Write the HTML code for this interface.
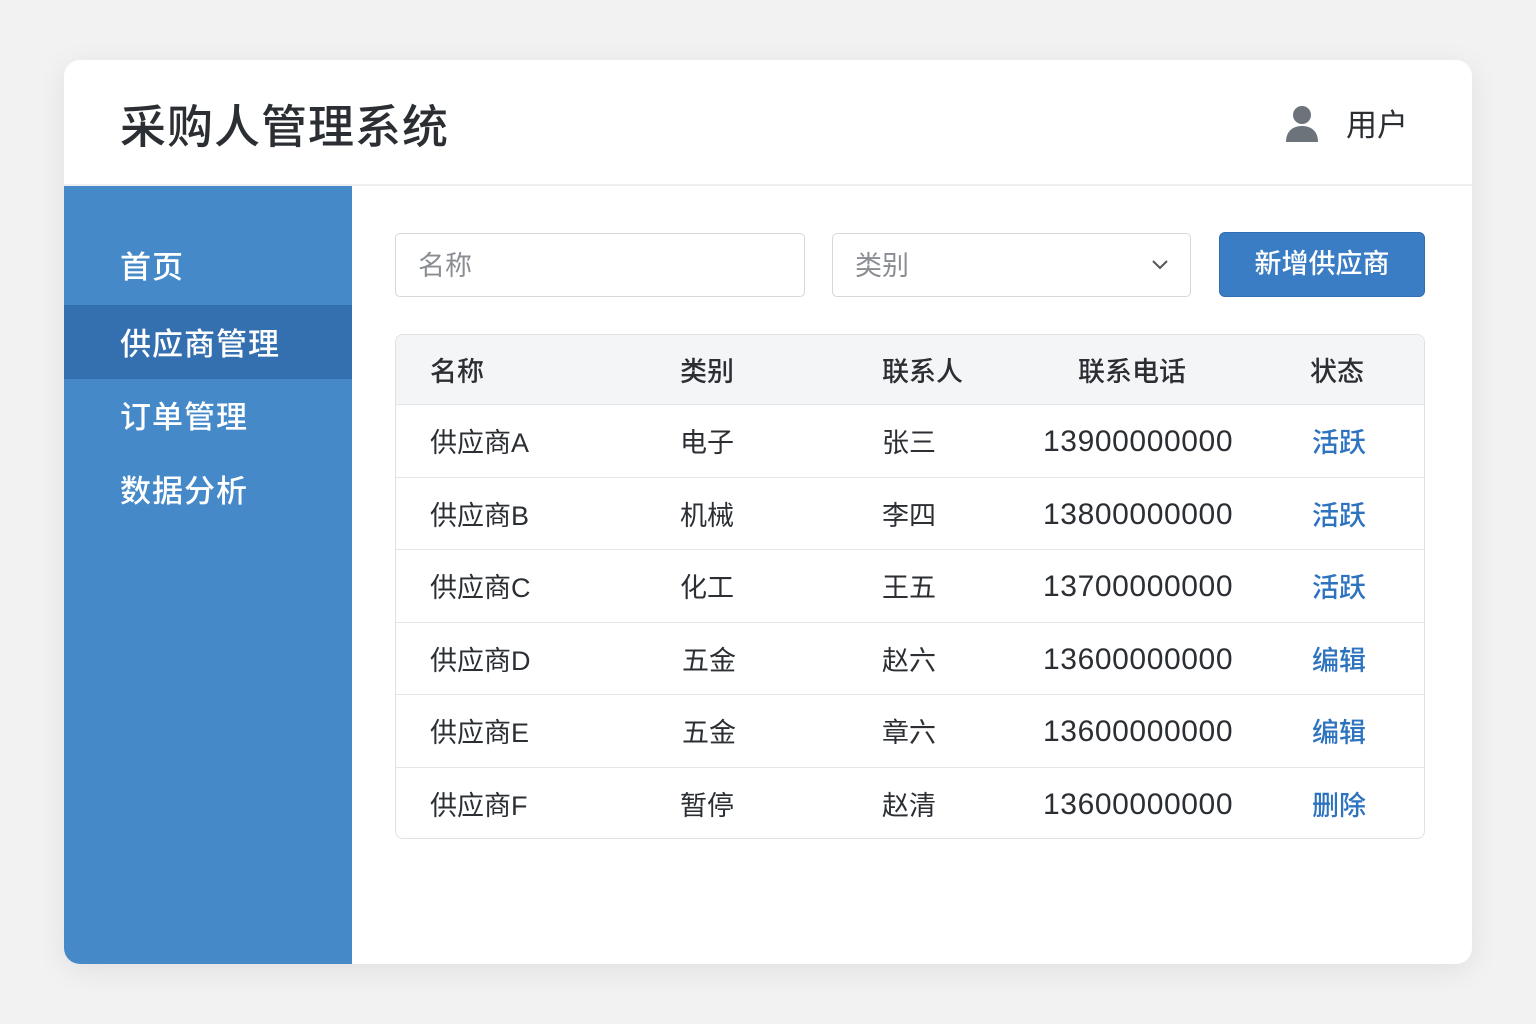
<!DOCTYPE html>
<html><head><meta charset="utf-8"><style>
*{margin:0;padding:0;box-sizing:border-box}
body{width:1536px;height:1024px;background:#f2f2f3;font-family:"Liberation Sans","Noto Sans CJK SC",sans-serif;position:relative;overflow:hidden}
.card{position:absolute;left:64px;top:60px;width:1408px;height:904px;background:#fff;border-radius:16px;box-shadow:0 6px 30px rgba(0,0,0,.08);overflow:hidden}
.hdr{position:absolute;left:0;top:0;width:1408px;height:126px;border-bottom:2px solid #eceef0}
.title{position:absolute;left:56px;top:31px;font-size:46px;color:#2b2f33;font-weight:500;letter-spacing:1px}
.user{position:absolute;left:1282px;top:40px;font-size:31px;color:#2b2f33}
.side{position:absolute;left:0;top:126px;width:288px;height:778px;background:#4589c8}
.side .it{position:absolute;left:56px;font-size:31px;color:#fff;font-weight:500;letter-spacing:1px}
.side .act{position:absolute;left:0;top:119px;width:288px;height:74px;background:#3470b0}
.in{position:absolute;top:173px;height:64px;border:1px solid #d4d7db;border-radius:5px;font-size:27px;color:#8a8e93;padding:10px 22px}
.btn{position:absolute;left:1155px;top:172px;width:206px;height:65px;background:#3a7dc4;border:1px solid #2f6eb0;border-radius:6px;color:#fff;font-size:27px;text-align:center;line-height:63px;font-weight:500}
.tbl{position:absolute;left:331px;top:274px;width:1030px;height:505px;border:1px solid #dfe1e4;border-radius:8px;overflow:hidden}
.row{position:absolute;left:0;width:1030px;height:72.5px;border-top:1px solid #e3e5e8;font-size:27px;color:#2b2f33}
.row span{position:absolute;top:16px}
.row span.ph{font-size:30px;top:20px;letter-spacing:0.6px}
.th{background:#f4f5f7;border-top:none;font-weight:500}
.st{color:#2e73c0;font-weight:500}
</style></head><body>
<div class="card">
<div class="hdr"><div class="title">采购人管理系统</div>
<svg style="position:absolute;left:1221px;top:45px" width="34" height="38" viewBox="0 0 34 38"><circle cx="17" cy="10" r="9" fill="#6c737b"/><path d="M1 37 C1 26 8 21 17 21 C26 21 33 26 33 37Z" fill="#6c737b"/></svg>
<div class="user">用户</div></div>
<div class="side"><div class="act"></div>
<div class="it" style="top:56px">首页</div><div class="it" style="top:133px">供应商管理</div><div class="it" style="top:206px">订单管理</div><div class="it" style="top:280px">数据分析</div></div>
<div class="in" style="left:331px;width:410px">名称</div>
<div class="in" style="left:768px;width:359px">类别<svg style="position:absolute;right:22px;top:26px" width="16" height="10"><path d="M1 1 L8 8 L15 1" stroke="#555" stroke-width="2" fill="none"/></svg></div>
<div class="btn">新增供应商</div>
<div class="tbl">
<div class="row th" style="top:0;height:69px"><span style="left:34px;top:15px">名称</span><span style="left:284px;top:15px">类别</span><span style="left:486px;top:15px">联系人</span><span style="left:682px;top:15px">联系电话</span><span style="left:914px;top:15px">状态</span></div>
<div class="row" style="top:69px"><span style="left:34px">供应商A</span><span style="left:284px">电子</span><span style="left:486px">张三</span><span class="ph" style="left:647px">13900000000</span><span class="st" style="left:916px">活跃</span></div>
<div class="row" style="top:141.5px"><span style="left:34px">供应商B</span><span style="left:284px">机械</span><span style="left:486px">李四</span><span class="ph" style="left:647px">13800000000</span><span class="st" style="left:916px">活跃</span></div>
<div class="row" style="top:214px"><span style="left:34px">供应商C</span><span style="left:284px">化工</span><span style="left:486px">王五</span><span class="ph" style="left:647px">13700000000</span><span class="st" style="left:916px">活跃</span></div>
<div class="row" style="top:286.5px"><span style="left:34px">供应商D</span><span style="left:286px">五金</span><span style="left:486px">赵六</span><span class="ph" style="left:647px">13600000000</span><span class="st" style="left:916px">编辑</span></div>
<div class="row" style="top:359px"><span style="left:34px">供应商E</span><span style="left:286px">五金</span><span style="left:486px">章六</span><span class="ph" style="left:647px">13600000000</span><span class="st" style="left:916px">编辑</span></div>
<div class="row" style="top:431.5px"><span style="left:34px">供应商F</span><span style="left:284px">暂停</span><span style="left:486px">赵清</span><span class="ph" style="left:647px">13600000000</span><span class="st" style="left:916px">删除</span></div>
</div>
</div>
</body></html>
